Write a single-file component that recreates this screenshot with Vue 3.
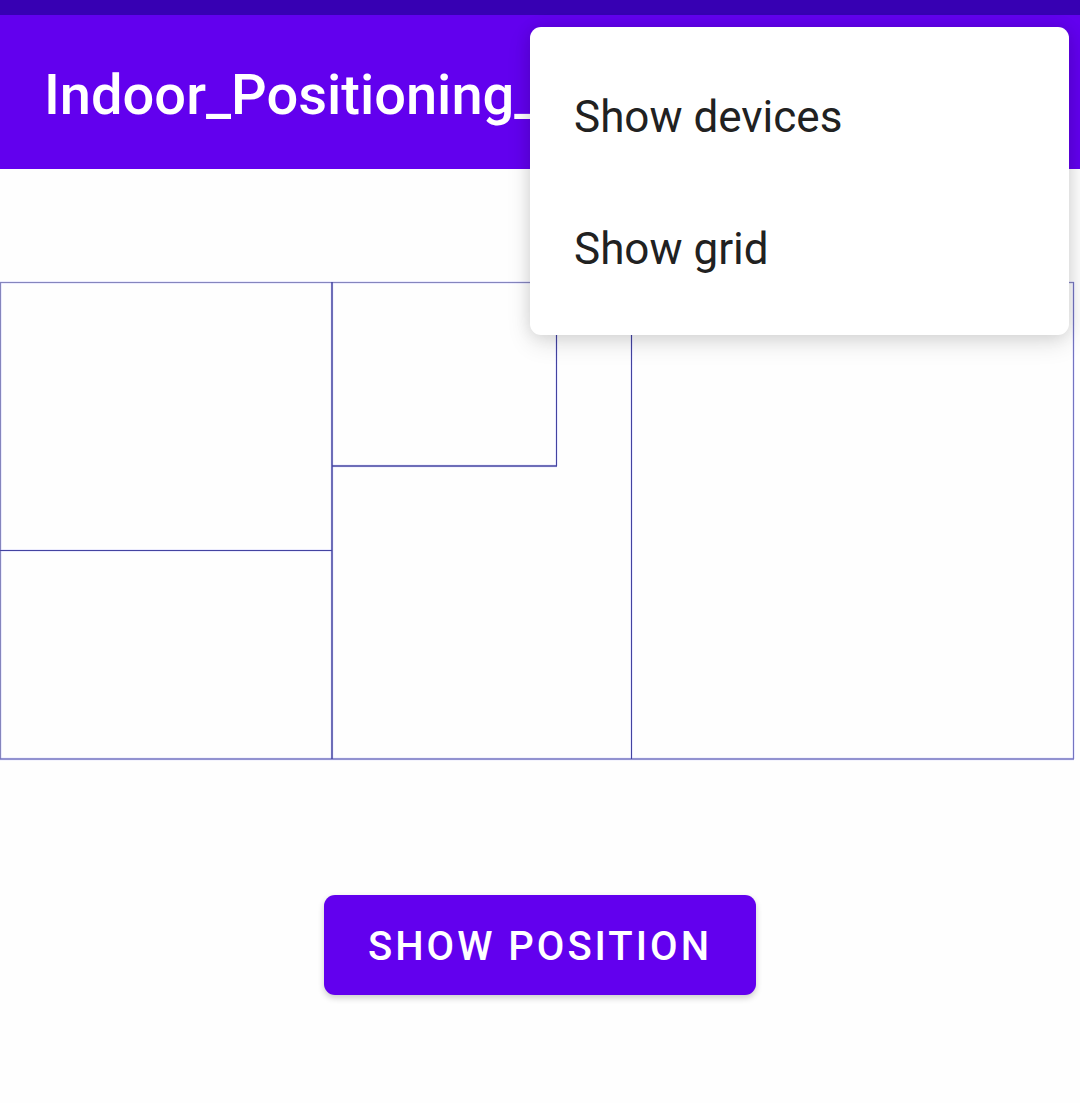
<script setup>
import { ref } from 'vue'

const menuItems = ['Show devices', 'Show grid']
const menuOpen = ref(true)

// Walls of the floor plan, in plan units
const walls = [
  { x1: 0, y1: 1.5, x2: 1074, y2: 1.5, tone: 'outer' },
  { x1: 0.5, y1: 1, x2: 0.5, y2: 478, tone: 'outer' },
  { x1: 1073.5, y1: 1, x2: 1073.5, y2: 478, tone: 'edge' },
  { x1: 0, y1: 478, x2: 1074, y2: 478, tone: 'edge wide' },
  { x1: 332, y1: 1, x2: 332, y2: 478, tone: 'inner wide' },
  { x1: 0, y1: 269.5, x2: 332, y2: 269.5, tone: 'inner' },
  { x1: 556.5, y1: 1, x2: 556.5, y2: 185, tone: 'inner' },
  { x1: 332, y1: 185, x2: 557, y2: 185, tone: 'inner wide' },
  { x1: 631.5, y1: 1, x2: 631.5, y2: 478, tone: 'inner' }
]
</script>

<template>
  <div class="screen">
    <div class="status-bar"></div>
    <header class="app-bar">
      <h1 class="title">Indoor_Positioning_</h1>
    </header>

    <nav v-if="menuOpen" class="menu" aria-label="Options">
      <button
        v-for="item in menuItems"
        :key="item"
        type="button"
        class="menu-item"
        @click="menuOpen = false"
      >{{ item }}</button>
    </nav>

    <main class="content">
      <svg class="plan" viewBox="0 0 1080 480" role="img" aria-label="Floor plan">
        <line
          v-for="(wall, i) in walls"
          :key="i"
          class="halo"
          :x1="wall.x1" :y1="wall.y1" :x2="wall.x2" :y2="wall.y2"
        />
        <line
          v-for="(wall, i) in walls"
          :key="'w' + i"
          :class="['wall', wall.tone]"
          :x1="wall.x1" :y1="wall.y1" :x2="wall.x2" :y2="wall.y2"
        />
      </svg>
      <button type="button" class="position-button">SHOW POSITION</button>
    </main>
  </div>
</template>

<style>
body {
  margin: 0;
  background: #fefefe;
}
</style>

<style scoped>
.screen {
  position: relative;
  min-height: 100vh;
  overflow: hidden;
  font-family: Roboto, "Liberation Sans", sans-serif;
}

.status-bar {
  height: 15px;
  background: #3700b3;
}

.app-bar {
  display: flex;
  align-items: center;
  height: 154px;
  padding: 0 44px;
  background: #6200ee;
}

.title {
  margin: 0;
  padding-top: 6px;
  color: #fff;
  font-size: 56px;
  font-weight: 500;
  line-height: 64px;
  white-space: nowrap;
}

.menu {
  position: absolute;
  top: 27px;
  right: 11px;
  z-index: 1;
  box-sizing: border-box;
  width: 539px;
  max-width: calc(100% - 22px);
  padding: 24px 0 20px;
  border-radius: 11px;
  background: #fff;
  box-shadow: 0 8px 24px rgba(0, 0, 0, 0.12), 0 0 16px rgba(0, 0, 0, 0.1);
}

.menu-item {
  display: block;
  width: 100%;
  height: 132px;
  padding: 0 44px;
  border: 0;
  background: none;
  color: #212121;
  font: 400 44px/52px Roboto, "Liberation Sans", sans-serif;
  text-align: left;
}

.content {
  display: flex;
  flex-direction: column;
  align-items: center;
  padding: 112px 0 108px;
}

.plan {
  display: block;
  width: 100%;
}

.halo {
  stroke: #8080ff;
  stroke-width: 3;
  stroke-opacity: 0.15;
}

.wall {
  stroke-width: 1;
}

.wall.outer {
  stroke: #8585bd;
}

.wall.edge {
  stroke: #7474c0;
}

.wall.inner {
  stroke: #4343a0;
}

.wall.wide {
  stroke-width: 2;
  stroke-opacity: 0.75;
}

.position-button {
  height: 100px;
  margin-top: 134px;
  padding: 4px 44px 0;
  border: 0;
  border-radius: 11px;
  background: #6200ee;
  color: #fff;
  font: 500 40px/48px Roboto, "Liberation Sans", sans-serif;
  letter-spacing: 3px;
  box-shadow: 0 3px 6px rgba(0, 0, 0, 0.2);
}
</style>
